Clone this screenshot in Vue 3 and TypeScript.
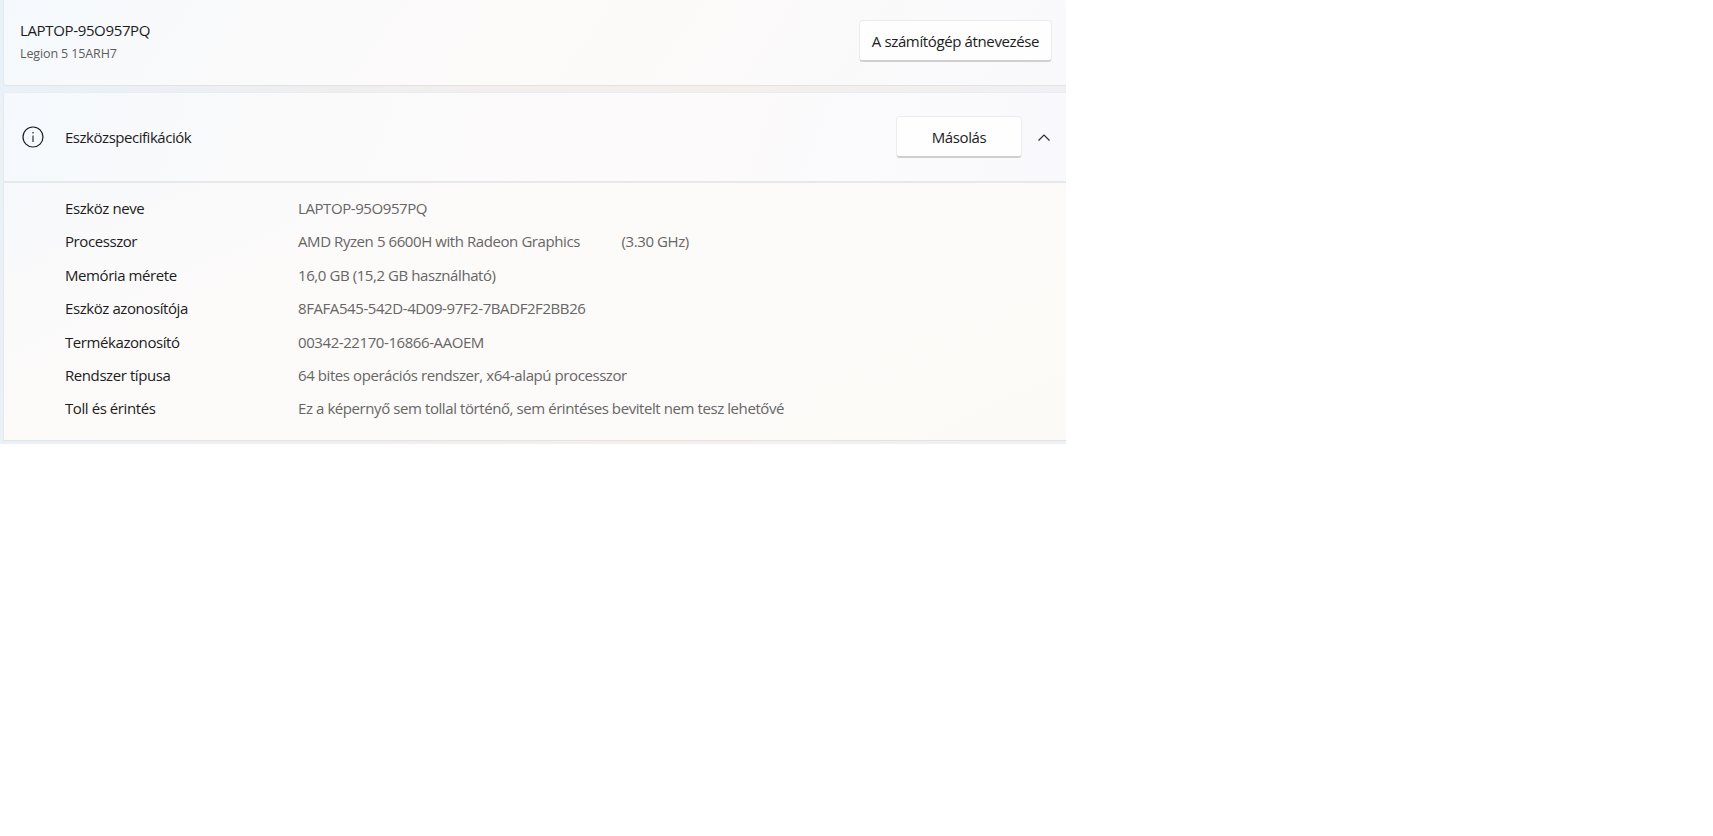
<script setup lang="ts">
const specs = [
  { label: 'Eszköz neve', value: 'LAPTOP-95O957PQ' },
  { label: 'Processzor', value: 'AMD Ryzen 5 6600H with Radeon Graphics\u00a0\u00a0\u00a0\u00a0\u00a0\u00a0\u00a0\u00a0\u00a0\u00a0\u00a0\u00a0(3.30 GHz)' },
  { label: 'Memória mérete', value: '16,0 GB (15,2 GB használható)' },
  { label: 'Eszköz azonosítója', value: '8FAFA545-542D-4D09-97F2-7BADF2F2BB26' },
  { label: 'Termékazonosító', value: '00342-22170-16866-AAOEM' },
  { label: 'Rendszer típusa', value: '64 bites operációs rendszer, x64-alapú processzor' },
  { label: 'Toll és érintés', value: 'Ez a képernyő sem tollal történő, sem érintéses bevitelt nem tesz lehetővé' },
]
</script>

<template>
  <div class="window">
    <section class="card device-card">
      <div class="device-name">
        <div class="title">LAPTOP-95O957PQ</div>
        <div class="model">Legion 5 15ARH7</div>
      </div>
      <button class="btn rename">A számítógép átnevezése</button>
    </section>

    <section class="card specs-card">
      <header class="specs-head">
        <svg class="info" width="22" height="22" viewBox="0 0 22 22" fill="none" stroke="#1d1d1d">
          <circle cx="11" cy="11" r="10" stroke-width="1.2" />
          <path d="M11 9.6V16" stroke-width="1.1" />
          <circle cx="11" cy="6.8" r="0.8" fill="#1d1d1d" stroke="none" />
        </svg>
        <span class="head-text">Eszközspecifikációk</span>
        <button class="btn copy">Másolás</button>
        <svg class="chevron" width="14" height="9" viewBox="0 0 14 9" fill="none" stroke="#2a2a2a" stroke-width="1.2">
          <path d="M1.5 7.5L7 2l5.5 5.5" />
        </svg>
      </header>
      <div class="specs-list">
        <div v-for="row in specs" :key="row.label" class="spec-row">
          <span class="spec-label">{{ row.label }}</span>
          <span class="spec-value">{{ row.value }}</span>
        </div>
      </div>
    </section>
  </div>
</template>

<style>
html, body {
  background: #ffffff;
}
</style>

<style scoped>
.window {
  width: 1066px;
  height: 444px;
  box-sizing: border-box;
  padding: 0 0 3px 3px;
  display: flex;
  flex-direction: column;
  gap: 6px;
  overflow: hidden;
  background: linear-gradient(100deg, #e9f1f8 0%, #f0eeee 35%, #f5efeb 65%, #eff0f5 100%);
  font-family: "Open Sans", "Noto Sans", sans-serif;
  color: #1c1c1c;
}

.card {
  box-sizing: border-box;
  border-left: 1px solid #e6e9ec;
  border-bottom: 1px solid #e3e3e4;
  background: linear-gradient(125deg, #f5f9fd 0%, #fbfafa 30%, #fcfaf9 60%, #f9f9fc 100%);
}

.device-card {
  height: 86px;
  flex: none;
  display: flex;
  align-items: center;
  justify-content: space-between;
  padding: 0 14px 3px 16px;
  border-bottom-left-radius: 4px;
}

.title {
  font-size: 15px;
  line-height: 24px;
  letter-spacing: -0.35px;
}

.model {
  margin-top: 2px;
  font-size: 12.5px;
  line-height: 20px;
  color: #5c5c5c;
  letter-spacing: -0.12px;
}

.btn {
  box-sizing: border-box;
  height: 42px;
  background: #fefefe;
  border: 1px solid #ececec;
  border-bottom: 2px solid #cfcfcf;
  border-radius: 4px;
  font: inherit;
  font-size: 15px;
  color: #1c1c1c;
  letter-spacing: -0.37px;
  padding: 1px 0 0;
}

.rename {
  width: 193px;
}

.specs-card {
  flex: 1;
  display: flex;
  flex-direction: column;
  border-top-left-radius: 4px;
  border-top: 1px solid #e9edf2;
  background: linear-gradient(155deg, #f4f8fd 0%, #fbfafa 28%, #fdfbf9 60%, #fcfaf7 100%);
}

.specs-head {
  flex: none;
  height: 90px;
  display: flex;
  align-items: center;
  padding: 0 15px 0 18px;
  border-bottom: 2px solid #e7e8ea;
  box-sizing: border-box;
  background: linear-gradient(110deg, #f5f9fd 0%, #fbfafa 30%, #fcfafa 60%, #f9f9fd 100%);
}

.info {
  flex: none;
}

.head-text {
  margin-left: 21px;
  flex: 1;
  font-size: 15px;
  letter-spacing: -0.47px;
}

.copy {
  width: 126px;
}

.chevron {
  flex: none;
  margin-left: 15px;
}

.specs-list {
  padding-top: 8.4px;
  display: flex;
  flex-direction: column;
}

.spec-row {
  display: flex;
  height: 33.4px;
  align-items: center;
  padding-left: 61px;
  font-size: 15px;
  letter-spacing: -0.42px;
}

.spec-label {
  width: 233px;
  flex: none;
}

.spec-value {
  color: #666666;
  white-space: nowrap;
}
</style>
